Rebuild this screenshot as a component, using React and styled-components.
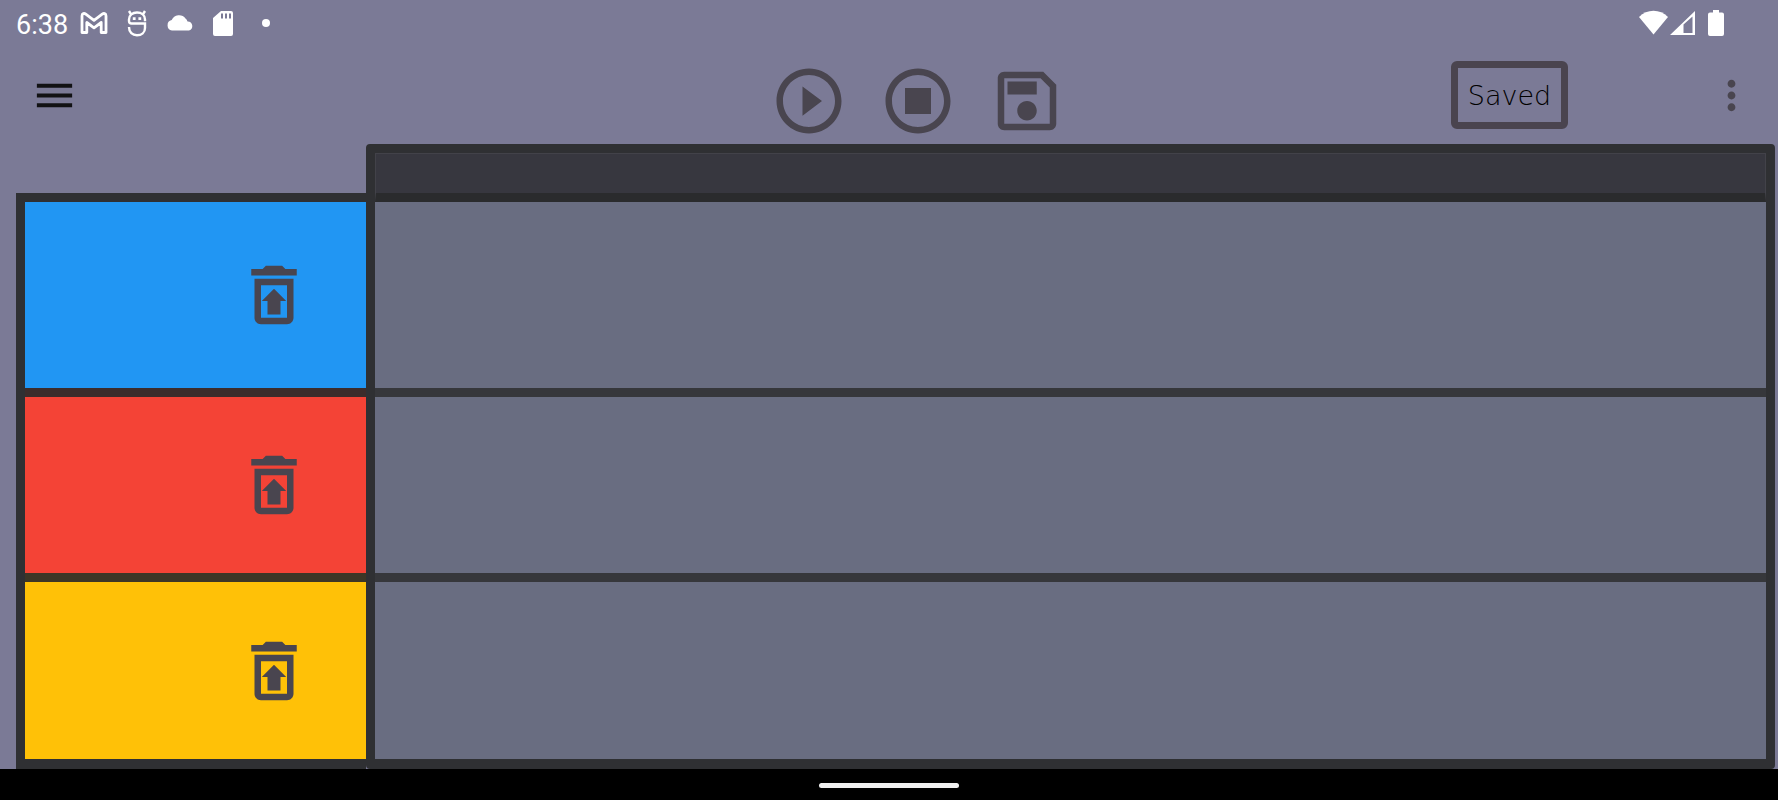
import React from 'react';
import styled, { createGlobalStyle, ThemeProvider } from 'styled-components';

const theme = {
  color: {
    page: '#7b7a96',
    frame: '#2f3033',
    icon: '#49454f',
    lane: '#696d81',
    ruler: '#37373f',
    rulerEdge: '#2a2b2d',
    laneEdge: '#36373b',
    white: '#ffffff',
    black: '#000000',
  },
};

const GlobalStyle = createGlobalStyle`
  * {
    box-sizing: border-box;
  }
  body {
    margin: 0;
    font-family: Roboto, sans-serif;
  }
`;

const Screen = styled.div`
  min-height: 100vh;
  display: flex;
  flex-direction: column;
  background-color: ${({ theme }) => theme.color.page};
`;

const StatusBar = styled.div`
  height: 48px;
  padding: 0 54px 2px 16px;
  display: flex;
  align-items: center;
  justify-content: space-between;
  color: ${({ theme }) => theme.color.white};
`;
const StatusGroup = styled.div`
  display: flex;
  align-items: center;
  gap: ${({ $gap }) => $gap};
`;
const Clock = styled.time`
  font-size: 27px;
  line-height: 32px;
  padding-top: 3px;
`;
const StatusIcon = styled.svg`
  display: block;
  height: 28px;
`;

const Toolbar = styled.header`
  height: 96px;
  padding: 0 23px 2px 31px;
  display: grid;
  grid-template-columns: 15fr auto 14fr;
`;
const ToolbarStart = styled.div`
  display: flex;
  align-items: center;
`;
const Transport = styled.div`
  display: flex;
  align-items: center;
  gap: 31px;
  padding-top: 12px;
`;
const ToolbarEnd = styled.div`
  display: flex;
  align-items: center;
  justify-content: flex-end;
  gap: 140px;
`;
const IconButton = styled.button`
  display: block;
  padding: 0;
  border: 0;
  background: none;
  cursor: pointer;
  color: ${({ theme, $dark }) => ($dark ? '#121214' : theme.color.icon)};

  svg {
    display: block;
    width: ${({ $size }) => $size};
    height: ${({ $size }) => $size};
    fill: currentColor;
  }
`;
const SavedButton = styled.button`
  width: 117px;
  height: 68px;
  padding: 2px 0 0;
  border: 7px solid #4a444f;
  border-radius: 6px;
  background: none;
  color: ${({ theme }) => theme.color.black};
  font-family: 'DejaVu Sans Light', 'DejaVu Sans', sans-serif;
  font-weight: 200;
  font-size: 27px;
  line-height: 32px;
  cursor: pointer;
`;

const Workspace = styled.main`
  flex: 1;
  display: flex;
  padding: 0 3px 0 16px;
`;
const Rows = styled.ul`
  flex: 1;
  margin: 0;
  padding: 0;
  list-style: none;
  display: grid;
  grid-template-rows: 195fr 185fr 177fr;
`;
const TrackPanel = styled.section`
  width: 350px;
  margin-top: 49px;
  display: flex;
  border: 9px solid ${({ theme }) => theme.color.frame};
  border-right: 0;
  border-bottom-width: 10px;
`;
const Track = styled.li`
  display: flex;
  align-items: center;
  justify-content: flex-end;
  padding-right: 53px;
  background-color: ${({ $color }) => $color};
  border-bottom: ${({ $edge }) => ($edge ? `9px solid ${$edge}` : '0')};
`;
const Timeline = styled.section`
  flex: 1;
  display: flex;
  flex-direction: column;
  border: 9px solid ${({ theme }) => theme.color.frame};
  border-bottom-width: 10px;
  border-radius: 4px;
`;
const Ruler = styled.div`
  height: 49px;
  background-color: ${({ theme }) => theme.color.ruler};
  border: 1px solid #424249;
  border-bottom: 9px solid ${({ theme }) => theme.color.rulerEdge};
`;
const Lane = styled.li`
  background-color: ${({ theme }) => theme.color.lane};
  border-bottom: 9px solid ${({ theme }) => theme.color.laneEdge};

  &:last-child {
    border-bottom: 0;
  }
`;

const NavBar = styled.footer`
  height: 31px;
  padding-top: 2px;
  display: flex;
  align-items: center;
  justify-content: center;
  background-color: ${({ theme }) => theme.color.black};
`;
const NavHandle = styled.div`
  width: 140px;
  height: 5px;
  border-radius: 3px;
  background-color: #f0f0f0;
`;

const tracks = [
  { name: 'Track 1', color: '#2196f3', edge: '#3c2c2b' },
  { name: 'Track 2', color: '#f44336', edge: '#3d3626' },
  { name: 'Track 3', color: '#ffc107' },
];

const Icon = ({ d }) => (
  <svg viewBox="0 0 24 24" aria-hidden="true">
    <path fillRule="evenodd" d={d} />
  </svg>
);

const icons = {
  menu: 'M3 18h18v-2H3v2zm0-5h18v-2H3v2zm0-7v2h18V6H3z',
  more: 'M12 8c1.1 0 2-.9 2-2s-.9-2-2-2-2 .9-2 2 .9 2 2 2zm0 2c-1.1 0-2 .9-2 2s.9 2 2 2 2-.9 2-2-.9-2-2-2zm0 6c-1.1 0-2 .9-2 2s.9 2 2 2 2-.9 2-2-.9-2-2-2z',
  play: 'M12 2C6.48 2 2 6.48 2 12s4.48 10 10 10 10-4.48 10-10S17.52 2 12 2zm0 18c-4.41 0-8-3.59-8-8s3.59-8 8-8 8 3.59 8 8-3.59 8-8 8zm-2-3.5l6-4.5-6-4.5z',
  stop: 'M12 2C6.48 2 2 6.48 2 12s4.48 10 10 10 10-4.48 10-10S17.52 2 12 2zm0 18c-4.41 0-8-3.59-8-8s3.59-8 8-8 8 3.59 8 8-3.59 8-8 8zm4-4H8V8h8z',
  save: 'M17 3H5c-1.11 0-2 .9-2 2v14c0 1.1.89 2 2 2h14c1.1 0 2-.9 2-2V7l-4-4zm2 16H5V5h11.17L19 7.83V19zm-7-7c-1.66 0-3 1.34-3 3s1.34 3 3 3 3-1.34 3-3-1.34-3-3-3zM6 6h9v4H6V6z',
  restore: 'M19 4h-3.5l-1-1h-5l-1 1H5v2h14zM6 7v12c0 1.1.9 2 2 2h8c1.1 0 2-.9 2-2V7zm2 2h8v10H8zM12 10.1l3.75 3.75H14V18h-4v-4.15H8.25z',
};

const MailIcon = () => (
  <StatusIcon width="28" viewBox="0 0 28 28" fill="none" stroke="currentColor" strokeWidth="2.8" strokeLinejoin="round">
    <path d="M2 23.500V7C2 4.300 4.200 4 5.800 5.200L14 11.300l8.200-6.100C23.800 4 26 4.300 26 7v16.500H21.200V13.500L14 18.800 6.800 13.500v10z" />
  </StatusIcon>
);

const DebugIcon = () => (
  <StatusIcon width="20" viewBox="0 0 20 28" fill="none" stroke="currentColor" strokeWidth="2.4">
    <path d="M18 12.200V10.500C18 6 14.500 3.500 10 3.500s-8 2.500-8 7v1.500c0 1.500.8 2.500 2.500 2.500H18V19c0 4.500-3.500 7.300-8 7.300S2 23.500 2 18" />
    <path d="M2 2l2.500 4M18 2l-2.500 4" />
    <path d="M5.800 9.700h2.800M11.400 9.700h2.800" strokeWidth="2.800" />
  </StatusIcon>
);

const App = () => (
  <ThemeProvider theme={theme}>
    <GlobalStyle />
    <Screen>
      <StatusBar>
        <StatusGroup $gap="19px">
          <StatusGroup $gap="12px">
            <Clock>6:38</Clock>
            <MailIcon />
          </StatusGroup>
          <DebugIcon />
          <StatusIcon width="28" viewBox="-1 0 28 28" fill="currentColor">
            <path d="M5 21.500a5.300 5.300 0 0 1-.3-10.400A8 8 0 0 1 18.500 9.500a5.500 5.500 0 0 1 2 3 4.600 4.600 0 0 1 1.500 9z" />
          </StatusIcon>
          <StatusIcon width="20" viewBox="0 0 20 28" fill="currentColor">
            <path fillRule="evenodd" d="M8 2h10a2 2 0 0 1 2 2v21a2 2 0 0 1-2 2H2a2 2 0 0 1-2-2V9zM8 4.500v5h2v-5zm4 0v5h2v-5zm4 0v5h2v-5z" />
          </StatusIcon>
          <StatusIcon width="40" viewBox="-1 0 40 28" fill="currentColor">
            <circle cx="13" cy="14" r="4" />
          </StatusIcon>
        </StatusGroup>
        <StatusGroup $gap="2px">
          <StatusIcon width="29" viewBox="0 0 29 28" fill="currentColor">
            <path d="M14.500 25.500L0 8C8 -.5 21 -.5 29 8z" />
          </StatusIcon>
          <StatusIcon width="36" viewBox="0 0 36 28" fill="currentColor">
            <path fillRule="evenodd" d="M0 26L25 2v24zM13.500 15.500V24h9V7.500z" />
          </StatusIcon>
          <StatusIcon width="16" viewBox="0 0 16 28" fill="currentColor">
            <path d="M5 1h6v2.500h3a2 2 0 0 1 2 2V25a2 2 0 0 1-2 2H2a2 2 0 0 1-2-2V5.500a2 2 0 0 1 2-2h3z" />
          </StatusIcon>
        </StatusGroup>
      </StatusBar>

      <Toolbar>
        <ToolbarStart>
          <IconButton $size="47px" $dark aria-label="Menu">
            <Icon d={icons.menu} />
          </IconButton>
        </ToolbarStart>
        <Transport>
          <IconButton $size="78px" aria-label="Play">
            <Icon d={icons.play} />
          </IconButton>
          <IconButton $size="78px" aria-label="Stop">
            <Icon d={icons.stop} />
          </IconButton>
          <IconButton $size="78px" aria-label="Save">
            <Icon d={icons.save} />
          </IconButton>
        </Transport>
        <ToolbarEnd>
          <SavedButton>Saved</SavedButton>
          <IconButton $size="47px" aria-label="More options">
            <Icon d={icons.more} />
          </IconButton>
        </ToolbarEnd>
      </Toolbar>

      <Workspace>
        <TrackPanel>
          <Rows>
            {tracks.map(({ name, color, edge }) => (
              <Track key={name} $color={color} $edge={edge}>
                <IconButton $size="78px" aria-label={`Restore ${name}`}>
                  <Icon d={icons.restore} />
                </IconButton>
              </Track>
            ))}
          </Rows>
        </TrackPanel>
        <Timeline>
          <Ruler />
          <Rows>
            {tracks.map(({ name }) => (
              <Lane key={name} />
            ))}
          </Rows>
        </Timeline>
      </Workspace>

      <NavBar>
        <NavHandle />
      </NavBar>
    </Screen>
  </ThemeProvider>
);

export default App;
